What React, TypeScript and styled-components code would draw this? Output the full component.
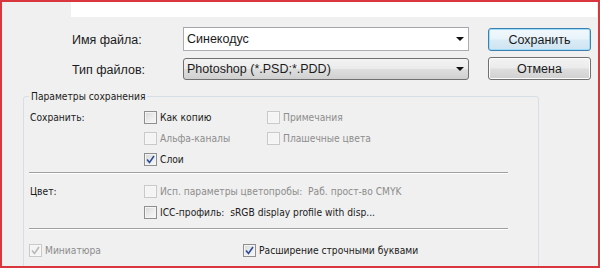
import React from "react";
import styled, { createGlobalStyle } from "styled-components";

const GlobalStyle = createGlobalStyle`
  html, body { margin: 0; padding: 0; background: #f0f0f0; }
  * { box-sizing: border-box; }
`;

const Frame = styled.div`
  width: 600px;
  height: 268px;
  border: 2px solid #d9363e;
  background: #f0f0f0;
  overflow: hidden;
  font-family: "Liberation Sans", Arial, sans-serif;
  color: #1b1b1b;
`;

const TopStrip = styled.div`
  height: 15px;
  margin: 0 1px 0 69px;
  background: #ffffff;
`;

const FileArea = styled.div`
  display: flex;
  padding: 10px 0 0 70px;
`;

const FieldGrid = styled.div`
  display: grid;
  grid-template-columns: 111px 286px;
  grid-template-rows: 24px 22px;
  row-gap: 7px;
  align-items: center;
`;

const FieldLabel = styled.div`
  font-size: 12.5px;
  color: #1b1b1b;
  padding-top: 1px;
`;

const ComboInput = styled.div`
  height: 24px;
  display: flex;
  align-items: center;
  justify-content: space-between;
  padding: 0 4px 0 3px;
  background: #ffffff;
  border: 1px solid #abadb3;
  border-top-color: #a3a6ad;
  font-size: 12.5px;
`;

const SelectBox = styled.div`
  height: 22px;
  display: flex;
  align-items: center;
  justify-content: space-between;
  padding: 0 4px 0 3px;
  border: 1px solid #707070;
  border-radius: 3px;
  background: linear-gradient(#f3f3f3 0%, #ebebeb 48%, #dedede 52%, #d0d0d0 100%);
  font-size: 12.5px;
`;

const Arrow = styled.span`
  width: 0;
  height: 0;
  border-left: 4px solid transparent;
  border-right: 4px solid transparent;
  border-top: 4px solid #111;
`;

const ButtonColumn = styled.div`
  display: flex;
  flex-direction: column;
  gap: 6px;
  margin-left: 19px;
  padding-top: 1px;
`;

const DialogButton = styled.div<{ $default?: boolean }>`
  width: 103px;
  height: 23px;
  display: flex;
  align-items: center;
  justify-content: center;
  font-size: 12.5px;
  border-radius: 3px;
  border: 1px solid ${(p) => (p.$default ? "#3c7fb1" : "#707070")};
  background: ${(p) =>
    p.$default
      ? "linear-gradient(#f1f8fc 0%, #e8f3fa 48%, #d9ebf6 52%, #cfe3f1 100%)"
      : "linear-gradient(#f3f3f3 0%, #ebebeb 48%, #dedede 52%, #d0d0d0 100%)"};
  box-shadow: ${(p) =>
    p.$default ? "inset 0 0 0 1px #9fdcf9" : "inset 0 0 0 1px #fcfcfc"};
`;

const Group = styled.fieldset`
  margin: 10px 0 0 21px;
  width: 516px;
  height: 200px;
  padding: 0 0 0 5px;
  border: 1px solid #d5dfe5;
  border-radius: 3px;
  font-family: "DejaVu Sans Condensed", "DejaVu Sans", sans-serif;
  font-stretch: semi-condensed;
  font-size: 10.2px;
`;

const Legend = styled.legend`
  margin-left: 0;
  padding: 0 2px;
  line-height: 13px;
  color: #1b1b1b;
`;

const Section = styled.div<{ $top: number; $bottom: number }>`
  display: grid;
  grid-template-columns: 114px 123px 1fr;
  grid-auto-rows: 21px;
  align-items: center;
  padding: ${(p) => p.$top}px 0 ${(p) => p.$bottom}px 1px;
`;

const FooterRow = styled.div`
  display: grid;
  grid-template-columns: 214px 1fr;
  grid-auto-rows: 21px;
  align-items: center;
  padding-top: 10px;
`;

const SectionLabel = styled.div<{ $rows: number }>`
  grid-row: span ${(p) => p.$rows};
  align-self: start;
  height: 21px;
  display: flex;
  align-items: center;
`;

const Separator = styled.div`
  width: 479px;
  height: 2px;
  border-top: 1px solid #a0a0a0;
  border-bottom: 1px solid #ffffff;
`;

const CheckRow = styled.label<{ $disabled?: boolean; $col?: number }>`
  display: flex;
  align-items: center;
  gap: 3px;
  white-space: pre;
  color: ${(p) => (p.$disabled ? "#8d8d8d" : "#1b1b1b")};
  ${(p) => (p.$col ? `grid-column: ${p.$col};` : "")}
`;

const Box = styled.span<{ $disabled?: boolean }>`
  width: 13px;
  height: 13px;
  flex: none;
  display: flex;
  align-items: center;
  justify-content: center;
  border: 1px solid ${(p) => (p.$disabled ? "#c9c9c9" : "#8e8f8f")};
  background: ${(p) =>
    p.$disabled
      ? "#f4f4f4"
      : "linear-gradient(135deg, #d6d6d6 0%, #ebebeb 50%, #f8f8f8 100%)"};
  box-shadow: inset 0 0 0 1px ${(p) => (p.$disabled ? "#f7f7f7" : "#f4f4f4")};
`;

function Check({
  label,
  checked,
  disabled,
  col,
}: {
  label: string;
  checked?: boolean;
  disabled?: boolean;
  col?: number;
}) {
  return (
    <CheckRow $disabled={disabled} $col={col}>
      <Box $disabled={disabled}>
        {checked && (
          <svg width="9" height="9" viewBox="0 0 9 9">
            <path
              d="M1 4.5 L3.5 7.5 L8 1"
              fill="none"
              stroke={disabled ? "#b8b8b8" : "#2b4c99"}
              strokeWidth="1.6"
            />
          </svg>
        )}
      </Box>
      {label}
    </CheckRow>
  );
}

export default function App() {
  return (
    <>
      <GlobalStyle />
      <Frame>
        <TopStrip />
        <FileArea>
          <FieldGrid>
            <FieldLabel>Имя файла:</FieldLabel>
            <ComboInput>
              Синекодус
              <Arrow />
            </ComboInput>
            <FieldLabel>Тип файлов:</FieldLabel>
            <SelectBox>
              Photoshop (*.PSD;*.PDD)
              <Arrow />
            </SelectBox>
          </FieldGrid>
          <ButtonColumn>
            <DialogButton $default>Сохранить</DialogButton>
            <DialogButton>Отмена</DialogButton>
          </ButtonColumn>
        </FileArea>
        <Group>
          <Legend>Параметры сохранения</Legend>
          <Section $top={4} $bottom={2}>
            <SectionLabel $rows={3}>Сохранить:</SectionLabel>
            <Check label="Как копию" col={2} />
            <Check label="Примечания" disabled col={3} />
            <Check label="Альфа-каналы" disabled col={2} />
            <Check label="Плашечные цвета" disabled col={3} />
            <Check label="Слои" checked col={2} />
          </Section>
          <Separator />
          <Section $top={7} $bottom={5}>
            <SectionLabel $rows={2}>Цвет:</SectionLabel>
            <Check
              label="Исп. параметры цветопробы:  Раб. прост-во CMYK"
              disabled
              col={2}
            />
            <Check
              label="ICC-профиль:  sRGB display profile with disp..."
              col={2}
            />
          </Section>
          <Separator />
          <FooterRow>
            <Check label="Миниатюра" checked disabled />
            <Check label="Расширение строчными буквами" checked />
          </FooterRow>
        </Group>
      </Frame>
    </>
  );
}
